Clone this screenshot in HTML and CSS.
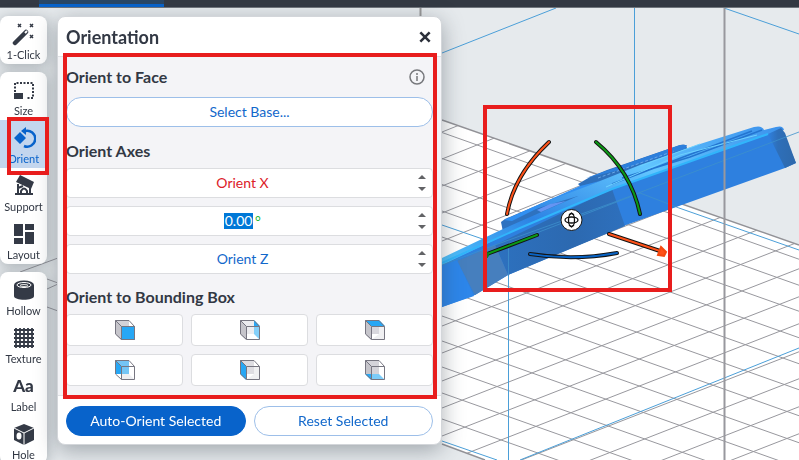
FILE: index.html
```
<!DOCTYPE html>
<html lang="en">
<head>
<meta charset="utf-8">
<title>Orientation</title>
<link rel="stylesheet" href="styles.css">
</head>
<body>
<svg class="scene" viewBox="0 0 799 460" preserveAspectRatio="xMinYMin slice" aria-hidden="true">
  <defs>
    <clipPath id="floor"><path d="M442 120 799 245V460H484L442 444Z"/></clipPath>
    <linearGradient id="top" x1="0" y1="1" x2="1" y2="0"><stop offset="0" stop-color="#54c8ff"/><stop offset=".3" stop-color="#2d83e4"/><stop offset=".65" stop-color="#62c6ff"/><stop offset="1" stop-color="#3b91ec"/></linearGradient>
    <linearGradient id="end" x1="0" y1="0" x2="1" y2="0"><stop offset="0" stop-color="#2f80df"/><stop offset=".35" stop-color="#2e6fb9"/><stop offset="1" stop-color="#2e69ab"/></linearGradient>
    <linearGradient id="side" x1="0" y1="0" x2="1" y2="0"><stop offset="0" stop-color="#2d71bf"/><stop offset=".6" stop-color="#2c69b0"/><stop offset="1" stop-color="#2e70bd"/></linearGradient>
  </defs>
  <path fill="#e6eaed" d="M0 0H799V460H0Z"/>
  <path fill="#fff" d="M442 120 799 245V460H484L442 444Z"/>
  <g clip-path="url(#floor)" stroke="#98989e" fill="none">
    <path d="M442 132.500l400 142M442 158.500l400 142M442 184.500l400 142M442 211l400 142M442 237l400 142M442 263l400 142M442 289l400 142M442 316l400 142M442 341l400 142M442 367l400 142M442 393l400 142M442 419l400 142"/>
    <path d="M442 132l400-160M442 159l400-160M442 186l400-160M442 213l400-160M442 241l400-160M442 269l400-158M442 298l400-157M442 326l400-156M442 353l400-156M442 381l400-156M442 408l400-156M442 436l400-156M442 463l400-156M442 491l400-156M442 518l400-156M442 546l400-156M442 573l400-156M442 601l400-156"/>
  </g>
  <path d="M442 120 799 245M442 444l43 16" stroke="#929297" stroke-width="1.500"/>
  <path d="M20 272 58 258M47 279l11 4M47 289l11-5M47 307l11 4" stroke="#98989e" fill="none"/>
  <path d="M634.500 8V185M508.500 270V460M442 53 556 8M724 8 799 34M679 208 799 250M442 225 500 245M442 441l55 19M520 460 799 348" stroke="#4b9fd8" fill="none"/>
  <path d="M420.500 8V20" stroke="#999" stroke-width="2"/>
  <path fill="#2e70bc" d="M578 184 590 177 607 170 680 145Q687 143 687 149L650 174 590 196Z"/>
  <path fill="#2d7fdc" d="M586 178 680 145 687 145 685 149 620 170Z"/>
  <path d="M598 178 674 151" stroke="#69a7e7" stroke-dasharray="3 2"/>
  <path fill="#2e72c0" d="M501 222 505 219 580 187 600 180 620 190 510 240 503 232Z"/>
  <path fill="#3190f2" d="M504 220 580 186 600 181 536 209 512 221Z"/>
  <path fill="url(#top)" d="M442 258 503 229 578 196 535 209 540 204 585 187 640 165 700 144 754 127Q762 125 764 130L776 127Q783 125 784 130L765 137 614 189 442 266Z"/>
  <path fill="#6595f3" d="M537 210 550 204 566 201 541 212Z"/>
  <path fill="#2e80df" d="M442 265 520 228 612 189 770 134 782 130 796 163 785 168 626 225 508 275 475 295 442 307Z"/>
  <path fill="url(#side)" d="M495 245 612 189 625 226 508 275Z"/>
  <path fill="#467fbe" d="M457 261 495 245 508 275 475 295Z"/>
  <path fill="#2d86ea" d="M442 265 457 260 474 296 442 307Z"/>
  <path fill="url(#end)" d="M768 134 781 128 785 133 796 163 785 168Z"/>
  <path d="M442 263 520 228 612 189 768 134" fill="none" stroke="#31b5fb" stroke-width="2"/>
  <path d="M612 184 752 131M622 178 690 157 762 130" fill="none" stroke="#2475d0" stroke-width="1.500"/>
  <path d="M606 187 680 155 757 135M640 166 700 144" fill="none" stroke="#6cd1ff"/>
  <path d="M442 265 495 245 612 203 799 132M495 249 640 193M640 193 679 208M508.500 245V276" fill="none" stroke="#3d91cc" stroke-width=".8"/>
  <path d="M724.500 8V460" stroke="#98989e" stroke-width="2"/>
  <g fill="none" stroke="#141414" stroke-width="4" stroke-linecap="round"><path d="M549 142Q514 175 507 214M596 142Q631 171 640 214M530 254Q574 261 617 253M537 235 487 254M609 234 660 251"/></g>
  <g fill="none" stroke-width="2" stroke-linecap="round"><path stroke="#ff5219" d="M549 142Q514 175 507 214M609 234 660 251"/><path stroke="#0b9b15" d="M596 142Q631 171 640 214M537 235 487 254"/><path stroke="#0863c5" d="M530 254Q574 261 617 253"/></g>
  <path fill="#ff5219" d="m661 247 5 5-2 4-6-1Z" stroke="#f4490f" stroke-width="2"/>
  <path fill="#0b7c25" d="m487 252 2 3-2 3-3-2Z" stroke="#0b7c25"/>
  <circle cx="571.500" cy="220" r="10.500" fill="#fff" stroke="#181818"/>
  <g fill="none" stroke="#111" stroke-width="1.300"><ellipse cx="571.500" cy="220" rx="6.500" ry="3"/><ellipse cx="571.500" cy="220" rx="3" ry="6.500"/><path d="m569 215 2.500-2 2.500 2m-5 10 2.500 2 2.500-2"/></g>
  <path fill="none" stroke="#e81d1d" stroke-width="4" d="M485 107H670V290H485Z"/>
</svg>

<svg class="defs" aria-hidden="true">
  <symbol id="cube" viewBox="0 0 20 20"><path fill="none" stroke="#777681" d="M.5.500H14L19.500 6.500V19.500H6.500L.5 14ZM.5.500l6 6M6.500 19.500v-13h13"/></symbol>
</svg>

<header class="topbar"><div class="tab"></div></header>
<main class="workspace">
  <nav class="tools" aria-label="Tools">
    <div class="group">
      <button class="tool"><svg viewBox="0 0 24 24"><path d="m3 21 11-11" stroke="#343a46" stroke-width="4.500" stroke-linecap="round"/><path d="m13 11 2-2" stroke="#fff" stroke-width="2"/><path d="m6 2 3 3m0-3L6 5m12-3 3 3m0-3-3 3m0 8 3 3m0-3-3 3" stroke="#343a46" stroke-width="1.500"/></svg><span>1-Click</span></button>
    </div>
    <div class="group">
      <button class="tool"><svg viewBox="0 0 24 24"><path d="M3 14V5h18v15h-7" fill="none" stroke="#343a46" stroke-width="2" stroke-dasharray="2 1.500"/><path d="M2 15h9v6H2Z" fill="#343a46"/></svg><span>Size</span></button>
      <button class="tool active"><svg viewBox="0 0 24 24"><path d="M13 5a8 8 0 1 1-1 15" fill="none" stroke="#0863cb" stroke-width="2.500"/><path d="m8 6 6 6-6 6-6-6Zm6-5v8L9 5Z" fill="#0863cb"/></svg><span>Orient</span></button>
      <button class="tool"><svg viewBox="0 0 24 24"><path d="m8 1 14 7-3 7L4 8Z" fill="#343a46"/><path d="M6 10v9m12-5v5M3 20h18M9 20v-3q3-5 6 0v3M6 14l5-2" fill="none" stroke="#343a46" stroke-width="2"/></svg><span>Support</span></button>
      <button class="tool"><svg viewBox="0 0 24 24"><path d="M2 2h9v12H2Zm11 0h9v6h-9Zm0 8h9v12h-9ZM2 16h9v6H2Z" fill="#343a46"/></svg><span>Layout</span></button>
    </div>
    <div class="group">
      <button class="tool"><svg viewBox="0 0 24 24"><path d="M2 7v11c0 5 20 5 20 0V7Z" fill="#343a46"/><ellipse cx="12" cy="7" rx="10" ry="4.500" fill="#343a46"/><ellipse cx="12" cy="7" rx="7" ry="2.500" fill="none" stroke="#fff"/><ellipse cx="12" cy="7.500" rx="4" ry="1" fill="none" stroke="#ddd"/></svg><span>Hollow</span></button>
      <button class="tool"><svg viewBox="0 0 24 24"><path d="M4 2v20M8 2v20M12 2v20M16 2v20M20 2v20M2 4h20M2 8h20M2 12h20M2 16h20M2 20h20" stroke="#343a46" stroke-width="1.800"/></svg><span>Texture</span></button>
      <button class="tool"><b class="letters" aria-hidden="true">Aa</b><span>Label</span></button>
      <button class="tool"><svg viewBox="0 0 24 24"><path d="m12 2 10 4v12l-10 5-10-5V6Z" fill="#343a46"/><path d="m2 6 10 5 10-5M12 11v12" fill="none" stroke="#fff"/><ellipse cx="7" cy="14" rx="2.500" ry="3.500" fill="#fff"/></svg><span>Hole</span></button>
    </div>
  </nav>

  <section class="panel" aria-labelledby="title">
    <header class="panel-head"><h1 id="title">Orientation</h1>
      <button class="close" aria-label="Close"><svg viewBox="0 0 12 12"><path d="m2 2 8 8m0-8-8 8" stroke="#2c303a" stroke-width="2.200"/></svg></button></header>
    <div class="panel-body">
      <div class="row"><h2>Orient to Face</h2><button class="info" aria-label="Information"><svg viewBox="0 0 16 16"><circle cx="8" cy="8" r="7" fill="none" stroke="#77787c" stroke-width="1.500"/><path d="M8 7v5M8 4v2" stroke="#77787c" stroke-width="1.500"/></svg></button></div>
      <button class="pill">Select Base...</button>
      <h2>Orient Axes</h2>
      <div class="axes">
        <div class="axis x"><input aria-label="Orient X" placeholder="Orient X"><div class="steps"><button aria-label="Increase X"></button><button class="down" aria-label="Decrease X"></button></div></div>
        <div class="axis y"><div class="angle"><input class="selected" aria-label="Orient Y" value="0.00"><span>°</span></div><div class="steps"><button aria-label="Increase Y"></button><button class="down" aria-label="Decrease Y"></button></div></div>
        <div class="axis z"><input aria-label="Orient Z" placeholder="Orient Z"><div class="steps"><button aria-label="Increase Z"></button><button class="down" aria-label="Decrease Z"></button></div></div>
      </div>
      <h2>Orient to Bounding Box</h2>
      <div class="faces">
        <button aria-label="Front"><svg viewBox="0 0 20 20"><path fill="#d3d2d8" d="M0 0h14v14H0Z"/><path fill="#c6c5cb" d="m0 0 6 6v14l-6-6Z"/><path fill="#27a7f5" d="M6 6h14v14H6Z"/><use href="#cube"/></svg></button>
        <button aria-label="Right"><svg viewBox="0 0 20 20"><path fill="#ececef" d="M0 0h14v14H0Z"/><path fill="#c6c5cb" d="m0 0 6 6v14l-6-6Z"/><path fill="#27a7f5" d="m14 0 6 6h-6Z"/><path fill="#84cff9" d="M14 6h6v14l-6-6Z"/><use href="#cube"/></svg></button>
        <button aria-label="Top"><svg viewBox="0 0 20 20"><path fill="#d8d7dd" d="M6 6h8v8H6Z"/><path fill="#f0f0f2" d="M14 6h6v14H6l8-6Z"/><path fill="#c6c5cb" d="m0 0 6 6v14l-6-6Z"/><path fill="#27a7f5" d="M0 0h14l6 6H6Z"/><use href="#cube"/></svg></button>
        <button aria-label="Back"><svg viewBox="0 0 20 20"><path fill="#27a7f5" d="M0 0h6v14H0Z"/><path fill="#74c5f5" d="M0 0h14v14H6V6Z"/><path fill="#eeeef1" d="M6 14h8l6 6H6Z"/><use href="#cube"/></svg></button>
        <button aria-label="Left"><svg viewBox="0 0 20 20"><path fill="#dedde2" d="M0 0h14v14H0Z"/><path fill="#f0f0f2" d="M14 6h6v14H6l8-6Z"/><path fill="#27a7f5" d="m0 0 6 6v14l-6-6Z"/><use href="#cube"/></svg></button>
        <button aria-label="Bottom"><svg viewBox="0 0 20 20"><path fill="#d5d4da" d="M0 0h14v14H0Z"/><path fill="#c6c5cb" d="m0 0 6 6v8H0Z"/><path fill="#27a7f5" d="M0 14h6v6Z"/><path fill="#7cccf9" d="M6 14h8l6 6H6Z"/><use href="#cube"/></svg></button>
      </div>
    </div>
    <footer class="panel-foot"><button class="pill primary">Auto-Orient Selected</button><button class="pill">Reset Selected</button></footer>
  </section>
</main>
</body>
</html>
```
FILE: styles.css
```
* { box-sizing: border-box; }
body {
  margin: 0;
  min-height: 100vh;
  overflow: hidden;
  background: #e6eaed;
  color: #323844;
  font: 14px/20px Lato, "Open Sans", sans-serif;
}
button, input { font: inherit; color: inherit; margin: 0; padding: 0; border: 0; }
button { background: none; }
h1, h2 { margin: 0; font-weight: 700; }
h1 { font-size: 18px; line-height: 24px; }
h2 { font-size: 16px; line-height: 20px; }
svg { display: block; }
.scene { position: fixed; inset: 0; width: 100%; height: 100%; z-index: -1; }
.defs { position: absolute; width: 0; height: 0; }
.topbar { height: 8px; padding: 0 39px; background: #333943; border-bottom: 1px solid #70767d; }
.tab { width: 125px; height: 7px; background: #294766; border-bottom: 3px solid #0863cb; }
.workspace { display: flex; align-items: flex-start; gap: 10px; padding-top: 8px; height: calc(100vh - 8px); }

.tools { display: flex; flex-direction: column; gap: 8px; width: 47px; }
.group { background: #fff; border-radius: 8px; box-shadow: 0 2px 14px rgba(50, 60, 70, .35); }
.tool {
  display: flex;
  flex-direction: column;
  align-items: center;
  width: 100%;
  height: 48px;
  padding-top: 6px;
  font-size: 11px;
  line-height: 18px;
}
.tool svg { width: 24px; height: 24px; }
.tool.active { position: relative; background: #c3d6ee; color: #0863cb; }
.tool.active::after { content: ""; position: absolute; inset: -3px -2px -7px 7px; border: 4px solid #e81d1d; z-index: 1; }
.letters { font: 900 17px/24px Lato, sans-serif; }

.panel { width: 385px; background: #fff; border: 1px solid #d3d6da; border-radius: 8px; box-shadow: 0 5px 22px rgba(50, 60, 70, .4); }
.panel-head { display: flex; align-items: center; justify-content: space-between; height: 40px; padding: 0 9px 0 8px; border-bottom: 1px solid #dfe1e4; }
.close { width: 14px; height: 14px; }
.panel-body { position: relative; display: flex; flex-direction: column; gap: 10px; padding: 10px 8px 9px; background: #f4f4f7; }
.panel-body::after { content: ""; position: absolute; inset: -4px 4px -4px 5px; border: 4px solid #e81d1d; pointer-events: none; }
.row { display: flex; align-items: center; justify-content: space-between; }
.info { width: 16px; height: 16px; margin-right: 8px; }
.pill { height: 30px; border: 1px solid #9dbfe9; border-radius: 15px; background: #fff; color: #1268cb; }
.panel-body .pill { margin-bottom: 4px; }
.axes { display: grid; gap: 8px; margin: -3px 0 3px; }
.axis { display: grid; grid-template-columns: 1fr 14px; align-items: center; height: 30px; background: #fff; border: 1px solid #dcdde0; border-radius: 4px; }
.axis > input, .angle { width: 100%; text-align: center; background: none; }
.axis input::placeholder { color: currentColor; opacity: 1; }
.x { color: #dc2028; }
.y { color: #20b52c; }
.z { color: #1268cb; }
.angle { display: flex; justify-content: center; gap: 2px; line-height: 16px; }
.angle .selected { width: 29px; height: 16px; background: #0078d7; color: #fff; text-align: center; }
.steps { display: grid; gap: 8px; }
.steps button { width: 8px; height: 4px; background: #626366; clip-path: polygon(50% 0, 100% 100%, 0 100%); }
.steps .down { clip-path: polygon(0 0, 100% 0, 50% 100%); }
.faces { display: grid; grid-template-columns: repeat(3, 1fr); gap: 8px; margin-top: -3px; }
.faces button { display: grid; place-items: center; height: 32px; background: #fff; border: 1px solid #dcdde0; border-radius: 4px; }
.faces svg { width: 20px; height: 20px; }
.panel-foot { display: grid; grid-template-columns: 1fr 1fr; gap: 8px; padding: 10px 8px 8px; border-top: 1px solid #dfe1e4; }
.primary { background: #0863cb; color: #fff; border-color: #0863cb; }
```
